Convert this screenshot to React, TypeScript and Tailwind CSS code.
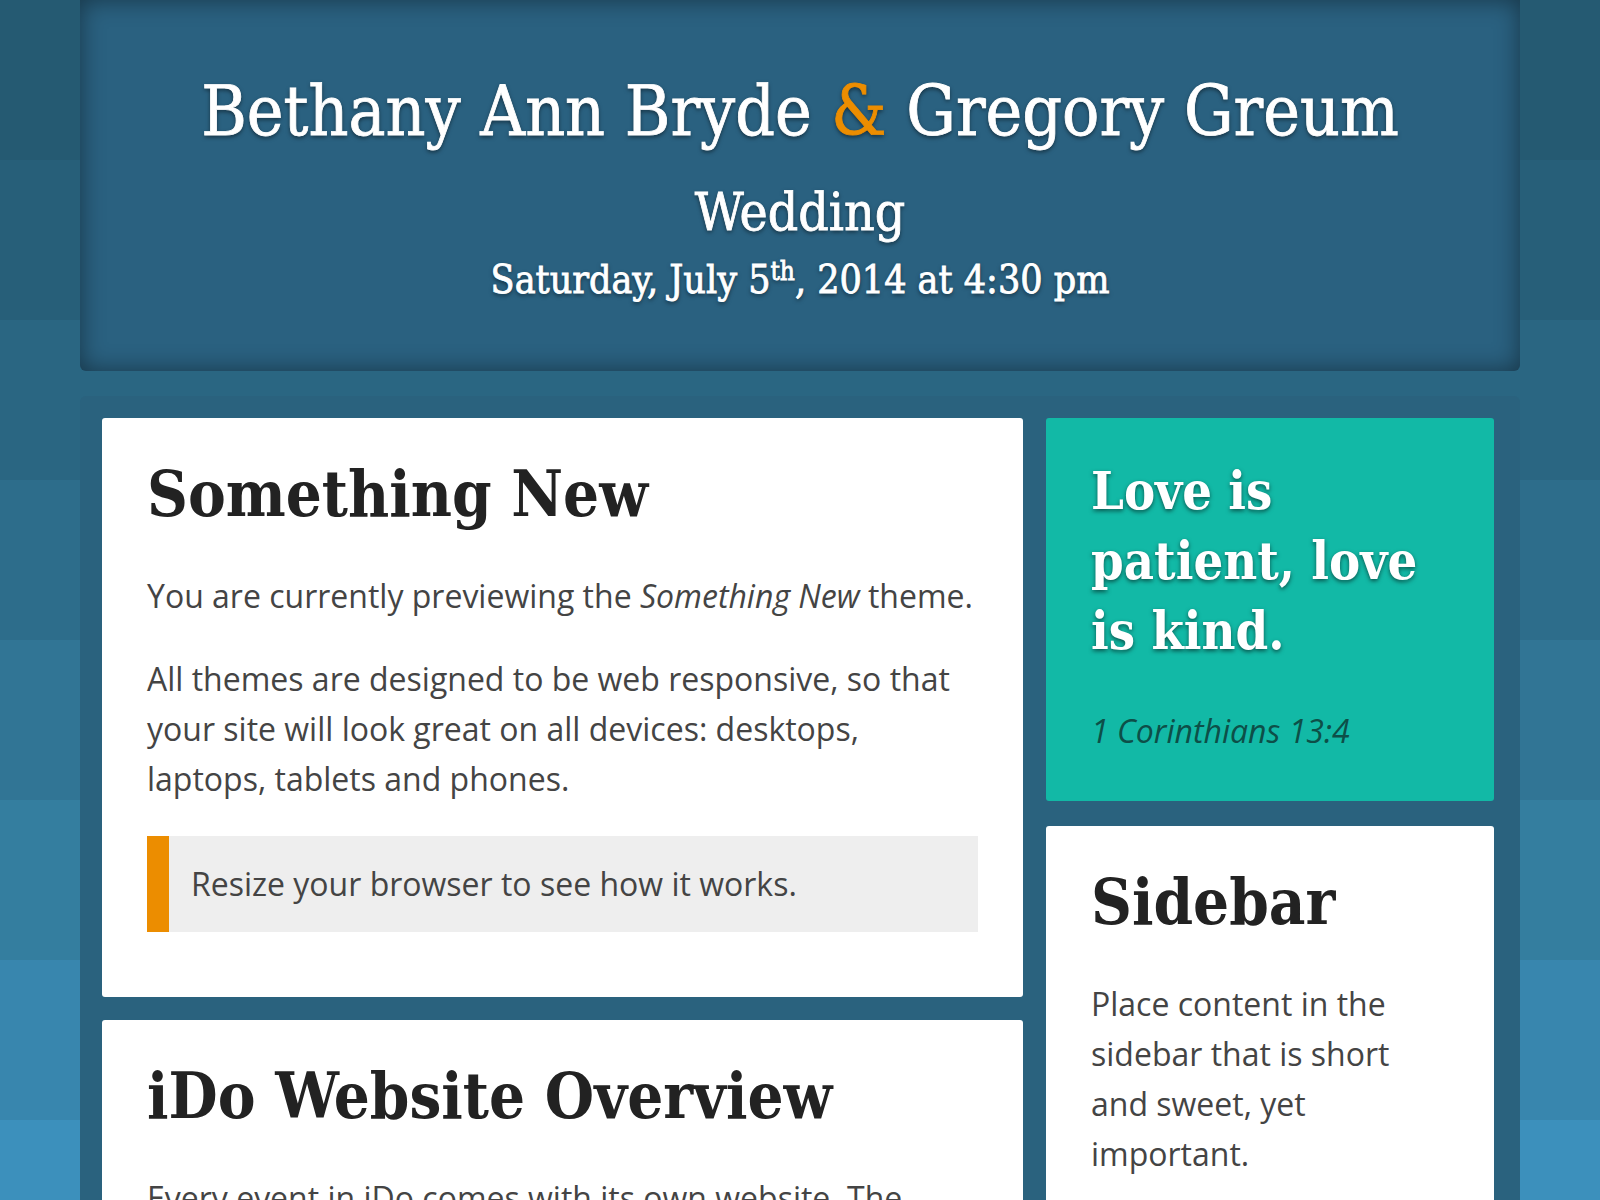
const serif = "font-['DejaVu_Serif_Condensed','DejaVu_Serif',serif]";
const sans = "font-['Open_Sans','Noto_Sans',sans-serif]";
const shadow = '[text-shadow:0_2px_4px_rgba(0,0,0,0.55)]';

function Card({ title, children }: { title: string; children: React.ReactNode }) {
  return (
    <div className="rounded-[3px] bg-white px-[45px] pt-[36px] pb-[45px]">
      <h2 className={`${serif} text-[63px] font-bold leading-[1.3] text-[#222]`}>{title}</h2>
      <div className={`${sans} mt-[35px] text-[32px] leading-[50px] text-[#444]`}>{children}</div>
    </div>
  );
}

export default function App() {
  return (
    <div className="h-[1200px] overflow-hidden bg-[linear-gradient(to_bottom,#255a72_0_160px,#275f79_160px_320px,#2a6682_320px_480px,#2d6d8b_480px_640px,#317595_640px_800px,#347e9f_800px_960px,#3886ae_960px_1120px,#3c90bc_1120px)]">
      <div className="mx-auto w-[1440px]">
        <header className="rounded-b-[6px] bg-[#2a6180] pt-[70px] pb-[67px] text-center text-white shadow-[inset_0_0_24px_rgba(0,0,0,0.45)] [-webkit-text-stroke:0.8px_currentColor]">
          <h1 className={`${serif} ${shadow} text-[69px] leading-[1.2]`}>
            Bethany Ann Bryde <span className="text-[#ec8d00]">&amp;</span> Gregory Greum
          </h1>
          <div className={`${serif} ${shadow} mt-[27px] text-[53px] leading-[1.2]`}>Wedding</div>
          <div className={`${serif} ${shadow} mt-[14px] text-[39px] leading-[1.2]`}>
            Saturday, July 5<sup className="text-[26px]">th</sup>, 2014 at 4:30 pm
          </div>
        </header>

        <div className="mt-[25px] flex gap-[23px] rounded-[6px] bg-[#2a627e] pt-[22px] pr-[25px] pl-[22px]">
          <main className="flex w-[921px] flex-col gap-[23px]">
            <Card title="Something New">
              <p>
                You are currently previewing the <em>Something New</em> theme.
              </p>
              <p className="mt-[33px]">
                All themes are designed to be web responsive, so that your site will look great on all devices: desktops,
                laptops, tablets and phones.
              </p>
              <blockquote className="mt-[32px] mb-[20px] border-l-[22px] border-[#ec8d00] bg-[#eee] py-[23px] pl-[22px]">
                Resize your browser to see how it works.
              </blockquote>
            </Card>
            <Card title="iDo Website Overview">
              <p>
                Every event in iDo comes with its own website. The website is where your guests go to learn everything
                about your event.
              </p>
            </Card>
          </main>

          <aside className="flex w-[448px] flex-col gap-[25px]">
            <div className="rounded-[3px] bg-[#12b9a6] px-[45px] pt-[38px] pb-[45px]">
              <div className={`${serif} ${shadow} text-[52px] font-bold leading-[70px] text-white`}>
                Love is patient, love is kind.
              </div>
              <div className={`${sans} mt-[40px] text-[32px] italic leading-[50px] text-[#0d4f48]`}>1 Corinthians 13:4</div>
            </div>
            <Card title="Sidebar">
              <p>Place content in the sidebar that is short and sweet, yet important.</p>
            </Card>
          </aside>
        </div>
      </div>
    </div>
  );
}
